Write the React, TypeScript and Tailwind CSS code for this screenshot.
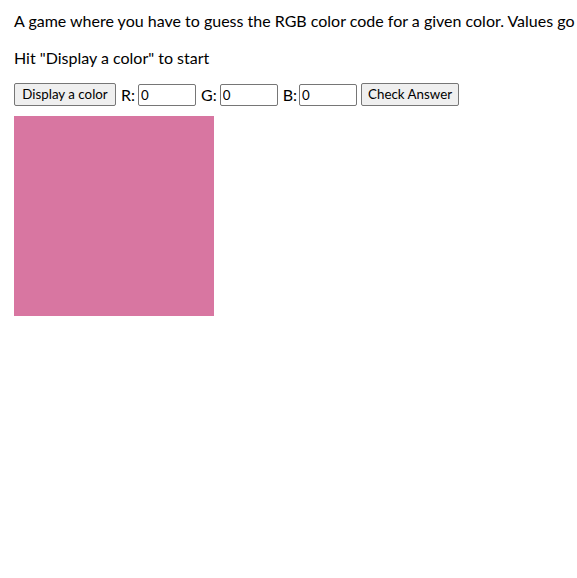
export default function App() {
  return (
    <main className="min-h-screen bg-white pl-[14px] pt-[10px] text-[16px] leading-[21px] text-black [font-family:Lato,sans-serif] whitespace-nowrap overflow-hidden">
      <p>A game where you have to guess the RGB color code for a given color. Values go from 0 to 255.</p>
      <p className="mt-[16px]">Hit "Display a color" to start</p>
      <div className="mt-[15px] flex h-[23px] items-center">
        <button className="h-[23px] w-[102px] rounded-[2px] border border-[#767676] bg-[#efefef] text-[13.33px] leading-none text-black">
          Display a color
        </button>
        <span className="ml-[5px] mr-[3px]">R:</span>
        <input readOnly value="0" className="h-[22px] w-[58px] rounded-[2px] border border-[#767676] px-[2px] text-[13.33px] outline-none" />
        <span className="ml-[5px] mr-[3px]">G:</span>
        <input readOnly value="0" className="h-[22px] w-[58px] rounded-[2px] border border-[#767676] px-[2px] text-[13.33px] outline-none" />
        <span className="ml-[5px] mr-[2px]">B:</span>
        <input readOnly value="0" className="h-[22px] w-[58px] rounded-[2px] border border-[#767676] px-[2px] text-[13.33px] outline-none" />
        <button className="ml-[4px] h-[23px] w-[98px] rounded-[2px] border border-[#767676] bg-[#efefef] text-[13.33px] leading-none text-black">
          Check Answer
        </button>
      </div>
      <div className="mt-[10px] h-[200px] w-[200px] bg-[#d876a1]" />
    </main>
  );
}
